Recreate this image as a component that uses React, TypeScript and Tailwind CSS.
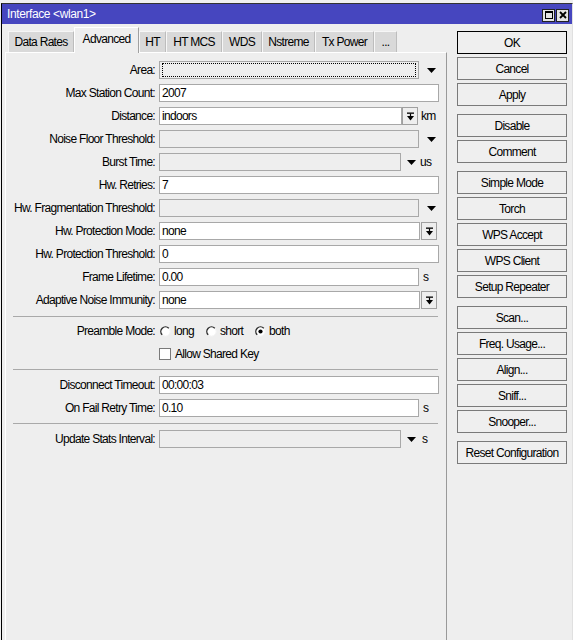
import React from "react";

function Arrow() {
  return (
    <svg width="9" height="5" viewBox="0 0 9 5" className="shrink-0">
      <polygon points="0,0 9,0 4.5,5" fill="#000" />
    </svg>
  );
}

function ComboBtn() {
  return (
    <div className="w-[16px] h-[18px] border border-[#a0a0a0] bg-[#eeeeee] flex items-center justify-center shrink-0">
      <svg width="9" height="9" viewBox="0 0 9 9">
        <rect x="1" y="0.5" width="7" height="1.3" fill="#000" />
        <rect x="3.9" y="1.5" width="1.2" height="2.6" fill="#000" />
        <polygon points="1,4 8,4 4.5,8.6" fill="#000" />
      </svg>
    </div>
  );
}

function Box({ w, value, disabled, focus }: { w: string; value?: string; disabled?: boolean; focus?: boolean }) {
  const bg = disabled || focus ? "bg-[#eeeeee]" : "bg-white";
  return (
    <div className={`${w} h-[18px] shrink-0 border border-[#a8a8a8] ${bg} flex items-center pl-[2px] text-black`}>
      {focus ? <div className="w-full h-[14px] mr-[2px] border border-dotted border-black" /> : value}
    </div>
  );
}

function Row({ label, children }: { label: string; children: React.ReactNode }) {
  return (
    <div className="flex items-center h-[18px]">
      <div className="w-[153px] pr-[4px] text-right shrink-0 whitespace-nowrap">{label}</div>
      {children}
    </div>
  );
}

function Sep({ mt }: { mt: string }) {
  return <div className={`${mt} ml-[7px] w-[425px] h-px bg-[#a9a9a9]`} />;
}

function Radio({ checked }: { checked?: boolean }) {
  return (
    <svg width="11" height="11" viewBox="0 0 11 11" className="shrink-0">
      <circle cx="5.5" cy="5.5" r="4.6" fill="#fff" stroke="#f4f4f4" />
      <path d="M2.2 8.8 A4.6 4.6 0 0 1 8.8 2.2" stroke="#2a2a2a" strokeWidth="1.4" fill="none" />
      {checked && <circle cx="5.5" cy="5.5" r="2.1" fill="#000" />}
    </svg>
  );
}

function Btn({ label, primary, mt }: { label: string; primary?: boolean; mt?: string }) {
  return (
    <div
      className={`${mt ?? "mt-[3px]"} h-[23px] w-[110px] flex items-center justify-center border ${
        primary ? "border-black" : "border-[#7a7a7a]"
      } bg-[#efefef] text-black whitespace-nowrap`}
    >
      {label}
    </div>
  );
}

const tabs: { label: string; w: string; sel?: boolean }[] = [
  { label: "Data Rates", w: "w-[66px]" },
  { label: "Advanced", w: "w-[65px]", sel: true },
  { label: "HT", w: "w-[27px]" },
  { label: "HT MCS", w: "w-[56px]" },
  { label: "WDS", w: "w-[40px]" },
  { label: "Nstreme", w: "w-[53px]" },
  { label: "Tx Power", w: "w-[59px]" },
  { label: "...", w: "w-[23px]" },
];

export default function App() {
  return (
    <div className="w-[573px] h-[640px] overflow-hidden bg-[#f0f0f0] pt-[3px] font-['Liberation_Sans',Arial,sans-serif] text-[12px] leading-none tracking-[-0.7px] text-black">
      <div className="ml-[1px] w-[572px] h-[637px] border-l border-t border-r border-l-black border-t-[#333] border-r-[#e0e0e0] bg-[#eeeeee] flex flex-col">
        {/* title bar */}
        <div className="h-[20px] bg-[#4646bf] flex items-center pl-[5px] pr-[3px] shrink-0">
          <div className="text-white flex-1 tracking-[-0.4px]">Interface &lt;wlan1&gt;</div>
          <div className="flex gap-[1px] mt-[2px]">
            <div className="w-[13px] h-[13px] bg-[#e4e4e4] border border-[#222] flex items-center justify-center">
              <div className="w-[8px] h-[8px] border border-black border-t-2" />
            </div>
            <div className="w-[13px] h-[13px] bg-[#e4e4e4] border border-[#222] flex items-center justify-center">
              <svg width="8" height="8" viewBox="0 0 8 8">
                <path d="M1 1 L7 7 M7 1 L1 7" stroke="#000" strokeWidth="1.8" />
              </svg>
            </div>
          </div>
        </div>

        {/* body */}
        <div className="flex flex-1 min-h-0">
          {/* left: tabs + panel */}
          <div className="pl-[3px] flex flex-col">
            <div className="h-[28px] flex items-end pl-[3px] shrink-0">
              {tabs.map((t) =>
                t.sel ? (
                  <div
                    key={t.label}
                    className={`${t.w} h-[26px] -mb-px relative z-10 bg-[#eeeeee] border-l border-t border-r border-l-white border-t-white border-r-[#a0a0a0] flex items-center justify-center pb-[3px] whitespace-nowrap`}
                  >
                    {t.label}
                  </div>
                ) : (
                  <div
                    key={t.label}
                    className={`${t.w} h-[21px] bg-[#d9d9d9] border-l border-t border-r border-l-[#f6f6f6] border-t-[#f6f6f6] border-r-[#bdbdbd] flex items-center justify-center whitespace-nowrap`}
                  >
                    {t.label}
                  </div>
                )
              )}
            </div>
            <div className="w-[442px] flex-1 border-l border-t border-r border-l-white border-t-white border-r-[#999] bg-[#eeeeee] pt-[8px] flex flex-col">
              <div className="flex flex-col gap-[5px]">
                <Row label="Area:">
                  <Box w="w-[260px]" focus />
                  <div className="ml-[8px]"><Arrow /></div>
                </Row>
                <Row label="Max Station Count:">
                  <Box w="w-[280px]" value="2007" />
                </Row>
                <Row label="Distance:">
                  <Box w="w-[243px]" value="indoors" />
                  <ComboBtn />
                  <span className="ml-[3px]">km</span>
                </Row>
                <Row label="Noise Floor Threshold:">
                  <Box w="w-[260px]" disabled />
                  <div className="ml-[8px]"><Arrow /></div>
                </Row>
                <Row label="Burst Time:">
                  <Box w="w-[242px]" disabled />
                  <div className="ml-[6px]"><Arrow /></div>
                  <span className="ml-[4px]">us</span>
                </Row>
                <Row label="Hw. Retries:">
                  <Box w="w-[280px]" value="7" />
                </Row>
                <Row label="Hw. Fragmentation Threshold:">
                  <Box w="w-[260px]" disabled />
                  <div className="ml-[8px]"><Arrow /></div>
                </Row>
                <Row label="Hw. Protection Mode:">
                  <Box w="w-[261px]" value="none" />
                  <div className="ml-[1px]"><ComboBtn /></div>
                </Row>
                <Row label="Hw. Protection Threshold:">
                  <Box w="w-[280px]" value="0" />
                </Row>
                <Row label="Frame Lifetime:">
                  <Box w="w-[260px]" value="0.00" />
                  <span className="ml-[4px]">s</span>
                </Row>
                <Row label="Adaptive Noise Immunity:">
                  <Box w="w-[261px]" value="none" />
                  <div className="ml-[1px]"><ComboBtn /></div>
                </Row>
              </div>

              <Sep mt="mt-[7px]" />

              <div className="mt-[5px]">
                <Row label="Preamble Mode:">
                  <div className="flex items-center ml-[1px]">
                    <Radio />
                    <span className="ml-[3px]">long</span>
                    <div className="ml-[12px]"><Radio /></div>
                    <span className="ml-[3px]">short</span>
                    <div className="ml-[12px]"><Radio checked /></div>
                    <span className="ml-[3px]">both</span>
                  </div>
                </Row>
              </div>
              <div className="mt-[5px] flex items-center h-[18px] pl-[153px]">
                <div className="w-[12px] h-[12px] bg-white border border-[#7a7a7a]" />
                <span className="ml-[4px]">Allow Shared Key</span>
              </div>

              <Sep mt="mt-[6px]" />

              <div className="mt-[6px] flex flex-col gap-[5px]">
                <Row label="Disconnect Timeout:">
                  <Box w="w-[280px]" value="00:00:03" />
                </Row>
                <Row label="On Fail Retry Time:">
                  <Box w="w-[260px]" value="0.10" />
                  <span className="ml-[4px]">s</span>
                </Row>
              </div>

              <Sep mt="mt-[6px]" />

              <div className="mt-[6px]">
                <Row label="Update Stats Interval:">
                  <Box w="w-[242px]" disabled />
                  <div className="ml-[6px]"><Arrow /></div>
                  <span className="ml-[6px]">s</span>
                </Row>
              </div>
            </div>
          </div>

          {/* right: buttons */}
          <div className="ml-[10px] pt-[7px] flex flex-col">
            <Btn label="OK" primary mt="mt-0" />
            <Btn label="Cancel" />
            <Btn label="Apply" />
            <Btn label="Disable" mt="mt-[8px]" />
            <Btn label="Comment" />
            <Btn label="Simple Mode" mt="mt-[8px]" />
            <Btn label="Torch" />
            <Btn label="WPS Accept" />
            <Btn label="WPS Client" />
            <Btn label="Setup Repeater" />
            <Btn label="Scan..." mt="mt-[8px]" />
            <Btn label="Freq. Usage..." />
            <Btn label="Align..." />
            <Btn label="Sniff..." />
            <Btn label="Snooper..." />
            <Btn label="Reset Configuration" mt="mt-[8px]" />
          </div>
        </div>
      </div>
    </div>
  );
}
